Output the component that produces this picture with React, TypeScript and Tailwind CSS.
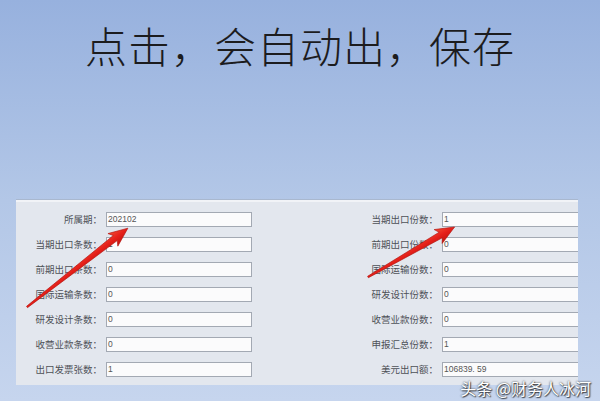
import React from 'react';

const LEFT_ROWS = [
  { label: '所属期：', value: '202102' },
  { label: '当期出口条数：', value: '1' },
  { label: '前期出口条数：', value: '0' },
  { label: '国际运输条数：', value: '0' },
  { label: '研发设计条数：', value: '0' },
  { label: '收营业款条数：', value: '0' },
  { label: '出口发票张数：', value: '1' },
];

const RIGHT_ROWS = [
  { label: '当期出口份数：', value: '1' },
  { label: '前期出口份数：', value: '0' },
  { label: '国际运输份数：', value: '0' },
  { label: '研发设计份数：', value: '0' },
  { label: '收营业款份数：', value: '0' },
  { label: '申报汇总份数：', value: '1' },
  { label: '美元出口额：', value: '106839. 59' },
];

function Field({ label, value, labelClass, inputClass }: { label: string; value: string; labelClass: string; inputClass: string }) {
  return (
    <div className="flex items-center h-[15px]">
      <span className={`${labelClass} text-right text-[9.5px] leading-none text-[#4e5157] whitespace-nowrap`}>{label}</span>
      <div className={`${inputClass} h-[15px] ml-[4px] shrink-0 border border-[#a3a9b3] bg-[#fbfbfc] px-[1px] text-[8.5px] leading-[13px] text-[#555] font-['Liberation_Sans',sans-serif]`}>
        {value}
      </div>
    </div>
  );
}

// red pointer arrow drawn along x axis, then rotated into place
function Arrow({ x, y, len, angle }: { x: number; y: number; len: number; angle: number }) {
  const L = len;
  const pts = `0,-0.8 ${L - 16},-3.2 ${L - 19},-8 ${L},0 ${L - 19},8 ${L - 16},3.2 0,0.8`;
  return (
    <g transform={`translate(${x} ${y}) rotate(${angle})`}>
      <polygon points={pts} fill="url(#arrowFill)" stroke="#b3140f" strokeWidth="0.6" strokeLinejoin="round" />
    </g>
  );
}

export default function App() {
  return (
    <div className="relative w-[600px] h-[401px] overflow-hidden bg-gradient-to-b from-[#97b1de] via-[#b3c7e7] to-[#c6d5ee] font-['Noto_Sans_CJK_SC',sans-serif]">
      {/* Title */}
      <h1 className="pt-[24px] text-center text-[42px] leading-none font-light tracking-[1px] text-[#1c1c1e]">
        点击，会自动出，保存
      </h1>

      {/* Form panel */}
      <div className="mt-[134px] ml-[16px] w-[562px] h-[185px] overflow-hidden bg-[#e3e7ee] border-t-2 border-[#f1f3f7] shadow-[0_-1px_0_#a9b8cf]">
        <div className="flex pt-[10px]">
          <div className="flex flex-col gap-[10px]">
            {LEFT_ROWS.map((r) => (
              <Field key={r.label} label={r.label} value={r.value} labelClass="w-[86px]" inputClass="w-[146px]" />
            ))}
          </div>
          <div className="flex flex-col gap-[10px]">
            {RIGHT_ROWS.map((r) => (
              <Field key={r.label} label={r.label} value={r.value} labelClass="w-[186px]" inputClass="w-[140px]" />
            ))}
          </div>
        </div>
      </div>

      {/* Arrows overlay */}
      <svg className="absolute inset-0 pointer-events-none" width="600" height="401" viewBox="0 0 600 401">
        <defs>
          <linearGradient id="arrowFill" x1="0" y1="0" x2="0" y2="1">
            <stop offset="0" stopColor="#f24a33" />
            <stop offset="0.5" stopColor="#e6201a" />
            <stop offset="1" stopColor="#c2140e" />
          </linearGradient>
        </defs>
        <Arrow x={27} y={307} len={128} angle={-38} />
        <Arrow x={368} y={277} len={100} angle={-30} />
      </svg>

      {/* Watermark */}
      <div className="absolute right-[9px] bottom-[5px] text-[16px] leading-none text-white [text-shadow:0_0_2px_rgba(0,0,0,0.85),1px_1px_1px_rgba(0,0,0,0.6)]">
        头条 @财务人冰河
      </div>
    </div>
  );
}
